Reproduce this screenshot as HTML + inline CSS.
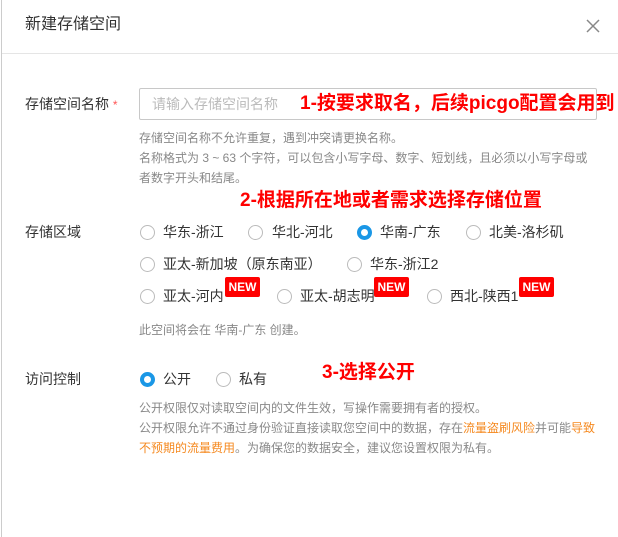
<!DOCTYPE html>
<html><head><meta charset="utf-8"><style>
*{margin:0;padding:0;box-sizing:border-box}
body{width:618px;height:537px;background:#fff;position:relative;overflow:hidden;font-family:"Liberation Sans","Noto Sans CJK SC",sans-serif;color:#333}
.a{position:absolute;white-space:nowrap;line-height:1}
.t14{font-size:14px}
.h{font-size:12px;color:#888;position:absolute;left:139px;line-height:20px;white-space:nowrap}
.r{position:absolute;width:15px;height:15px;border:1px solid #bbb;border-radius:50%;background:#fff}
.r.on{border:4px solid #1a97e6}
.red{color:#f00;font-weight:bold;font-size:19px}
.new{position:absolute;background:#f00;color:#fff;font-size:12px;font-weight:bold;width:35px;height:20px;line-height:20px;text-align:center;border-radius:2px}
.o{color:#f5891f}
</style></head><body>
<div style="position:absolute;left:1px;top:0;width:1px;height:537px;background:#ccc"></div>
<div class="a" style="left:25px;top:17px;font-size:16px">新建存储空间</div>
<svg style="position:absolute;left:586px;top:19px" width="14" height="14" viewBox="0 0 14 14"><path d="M1 1L13 13M13 1L1 13" stroke="#888" stroke-width="1.5" fill="none"/></svg>
<div style="position:absolute;left:2px;right:0;top:53px;height:1px;background:#e5e5e5"></div>

<div class="a t14" style="left:25px;top:97px">存储空间名称 <span style="color:#f55;font-size:12px">*</span></div>
<div style="position:absolute;left:139px;top:88px;width:458px;height:32px;border:1px solid #c8c8c8;border-radius:2px"></div>
<div class="a t14" style="left:152px;top:97px;color:#bbb">请输入存储空间名称</div>
<div class="a red" style="left:300px;top:94px">1-按要求取名，后续picgo配置会用到</div>
<div class="h" style="top:128px">存储空间名称不允许重复，遇到冲突请更换名称。<br>名称格式为 3 ~ 63 个字符，可以包含小写字母、数字、短划线，且必须以小写字母或<br>者数字开头和结尾。</div>

<div class="a red" style="left:240px;top:191px">2-根据所在地或者需求选择存储位置</div>
<div class="a t14" style="left:25px;top:225px">存储区域</div>
<div class="r" style="left:140px;top:225px"></div><div class="a t14" style="left:163px;top:225px">华东-浙江</div>
<div class="r" style="left:248px;top:225px"></div><div class="a t14" style="left:272px;top:225px">华北-河北</div>
<div class="r on" style="left:357px;top:225px"></div><div class="a t14" style="left:380px;top:225px">华南-广东</div>
<div class="r" style="left:466px;top:225px"></div><div class="a t14" style="left:489px;top:225px">北美-洛杉矶</div>

<div class="r" style="left:140px;top:257px"></div><div class="a t14" style="left:163px;top:257px">亚太-新加坡（原东南亚）</div>
<div class="r" style="left:347px;top:257px"></div><div class="a t14" style="left:370px;top:257px">华东-浙江2</div>

<div class="r" style="left:140px;top:289px"></div><div class="a t14" style="left:163px;top:289px">亚太-河内</div>
<div class="new" style="left:225px;top:277px">NEW</div>
<div class="r" style="left:277px;top:289px"></div><div class="a t14" style="left:300px;top:289px">亚太-胡志明</div>
<div class="new" style="left:374px;top:277px">NEW</div>
<div class="r" style="left:427px;top:289px"></div><div class="a t14" style="left:450px;top:289px">西北-陕西1</div>
<div class="new" style="left:519px;top:277px">NEW</div>

<div class="h" style="top:320px">此空间将会在 华南-广东 创建。</div>

<div class="a t14" style="left:25px;top:372px">访问控制</div>
<div class="r on" style="left:140px;top:372px"></div><div class="a t14" style="left:163px;top:372px">公开</div>
<div class="r" style="left:216px;top:372px"></div><div class="a t14" style="left:239px;top:372px">私有</div>
<div class="a red" style="left:322px;top:363px">3-选择公开</div>
<div class="h" style="top:398px">公开权限仅对读取空间内的文件生效，写操作需要拥有者的授权。<br>公开权限允许不通过身份验证直接读取您空间中的数据，存在<span class="o">流量盗刷风险</span>并可能<span class="o">导致</span><br><span class="o">不预期的流量费用</span>。为确保您的数据安全，建议您设置权限为私有。</div>
</body></html>
